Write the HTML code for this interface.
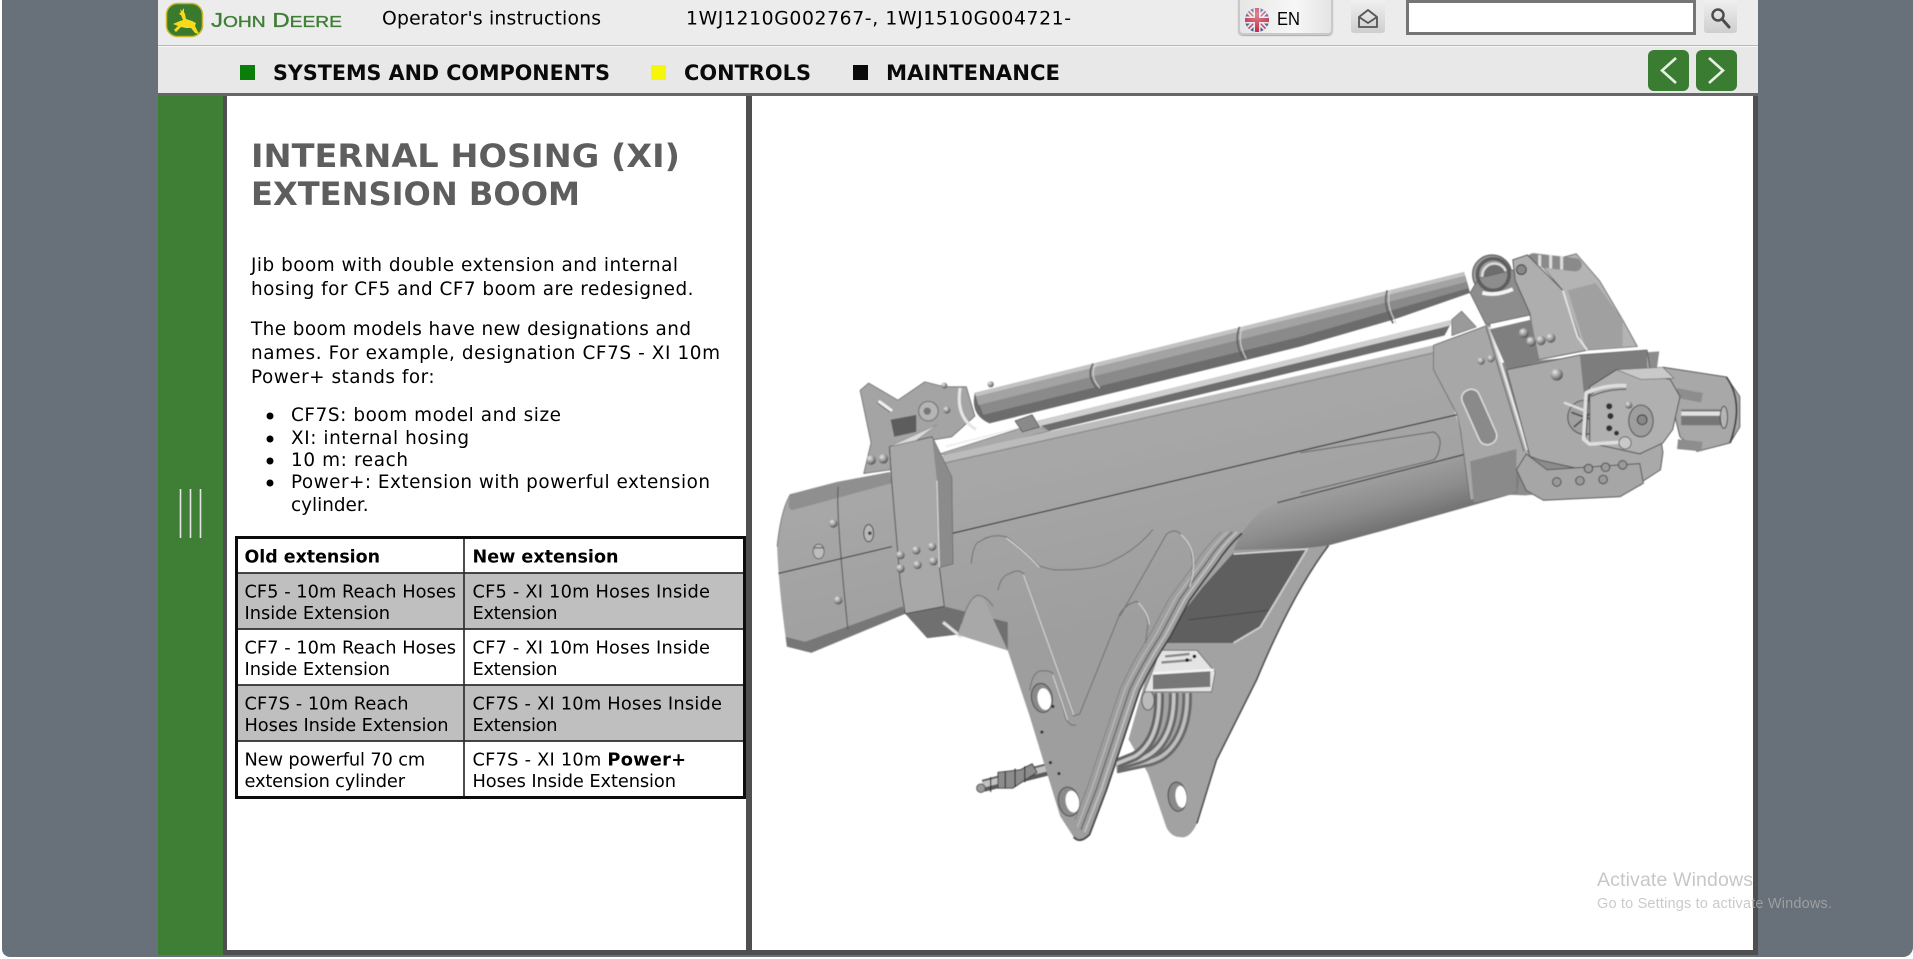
<!DOCTYPE html>
<html lang="en"><head><meta charset="utf-8"><title>Operator's instructions</title>
<style>
html,body{margin:0;padding:0;width:1913px;height:959px;overflow:hidden;background:#fff}
.a{position:absolute}
#bg{left:2px;top:0;width:1911px;height:957px;background:#687079;border-radius:0 0 10px 8px}
#head{left:158px;top:0;width:1600px;height:45px;background:#ececec}
#hl{left:158px;top:45px;width:1600px;height:2px;background:linear-gradient(#b9b9b9 50%,#f6f6f6 50%)}
#nav{left:158px;top:47px;width:1600px;height:46px;background:#e8e8e8}
#nl{left:158px;top:93px;width:1600px;height:3px;background:#666}
#side{left:158px;top:96px;width:65px;height:859px;background:#3f7f35}
#frame{left:223px;top:96px;width:1535px;height:859px;background:#4f4f4f}
#pl{left:227px;top:96px;width:519px;height:854px;background:#fff}
#pr{left:752px;top:96px;width:1001px;height:854px;background:#fff}
.btn{background:linear-gradient(#f0f0f0,#cfcfcf);border-radius:0 0 3px 3px}
#en{left:1238px;top:0;width:91px;height:33px;border:2px solid #c9c9c9;border-top:0;border-radius:0 0 5px 5px;background:linear-gradient(90deg,#e6e6e6,#f7f7f7 60%,#e4e4e4);box-shadow:0 1px 1px #aaa}
#inp{left:1406px;top:0;width:284px;height:29px;border:3px solid #757575;background:#fff}
.g{width:41px;height:41px;top:50px;background:#3a7d32;border-radius:6px}
svg{position:absolute;left:0;top:0}
text{font-family:"DejaVu Sans","Liberation Sans",sans-serif;fill:#000}
.t{font-size:17.8px}.p{font-size:18.4px}
.n{font-size:21.5px;font-weight:bold;fill:#0a0a0a}
.h{font-size:32px;font-weight:bold;fill:#5e5e5e}
.b{font-weight:bold}
</style></head><body>
<div class="a" id="bg"></div>
<div class="a" id="head"></div><div class="a" id="hl"></div><div class="a" id="nav"></div><div class="a" id="nl"></div>
<div class="a" id="frame"></div><div class="a" id="side"></div><div class="a" id="pl"></div><div class="a" id="pr"></div>
<div class="a" id="en"></div>
<div class="a btn" style="left:1351px;top:0;width:34px;height:33px"></div>
<div class="a" id="inp"></div>
<div class="a btn" style="left:1704px;top:0;width:33px;height:33px"></div>
<div class="a g" style="left:1648px"></div><div class="a g" style="left:1696px"></div>

<svg width="1913" height="959" viewBox="0 0 1913 959" xmlns="http://www.w3.org/2000/svg">
<defs>
<linearGradient id="face" gradientUnits="userSpaceOnUse" x1="950" y1="320" x2="990" y2="500"><stop offset="0" stop-color="#a9a9a9"/><stop offset="1" stop-color="#9e9e9e"/></linearGradient>
<linearGradient id="under" gradientUnits="userSpaceOnUse" x1="1120" y1="385" x2="1135" y2="440"><stop offset="0" stop-color="#a4a4a4"/><stop offset=".55" stop-color="#8c8c8c"/><stop offset="1" stop-color="#6a6a6a"/></linearGradient>
<radialGradient id="riv" cx=".35" cy=".3" r=".8"><stop offset="0" stop-color="#e8e8e8"/><stop offset=".6" stop-color="#8a8a8a"/><stop offset="1" stop-color="#3d3d3d"/></radialGradient>
<radialGradient id="gloss" cx=".5" cy=".25" r=".8"><stop offset="0" stop-color="#fff" stop-opacity=".45"/><stop offset="1" stop-color="#fff" stop-opacity="0"/></radialGradient>
<clipPath id="fl"><circle cx="1257" cy="20" r="12"/></clipPath>
<filter id="soft"><feGaussianBlur stdDeviation=".45"/></filter>
</defs>

<!-- logo -->
<rect x="166.500" y="3.500" width="36" height="33" rx="11" fill="#3a7a2c" stroke="#c9b62c" stroke-width="1.500"/>
<path d="M173,24 L180,21 L183,20 L181,15 L179,14 L181,12 L180,9 L182,11 L184,8 L184,12 L185,14 L186,19 L192,21 L196,23 L195,26 L199,34 L195,33 L191,28 L186,28 L181,27 L176,32 L174,30 L178,26 Z" fill="#f7d91e"/>
<text x="211" y="27" style='font-family:"Liberation Sans",sans-serif;font-size:20px;fill:#3f7f35' stroke="#3f7f35" stroke-width=".35" textLength="131" lengthAdjust="spacingAndGlyphs">J<tspan font-size="16">OHN</tspan> D<tspan font-size="16">EERE</tspan></text>

<!-- header text -->
<text x="382" y="24.500" font-size="18.800" textLength="219">Operator's instructions</text>
<text x="686" y="24.500" font-size="18.800" textLength="385">1WJ1210G002767-, 1WJ1510G004721-</text>

<!-- flag -->
<g clip-path="url(#fl)"><rect x="1245" y="8" width="24" height="24" fill="#3b4f8f"/>
<path d="M1245,8 L1269,32 M1269,8 L1245,32" stroke="#e8e2e6" stroke-width="5"/>
<path d="M1245,8 L1269,32 M1269,8 L1245,32" stroke="#b52c46" stroke-width="1.500"/>
<path d="M1257,8 V32 M1245,20 H1269" stroke="#e8e2e6" stroke-width="7"/>
<path d="M1257,8 V32 M1245,20 H1269" stroke="#c0223f" stroke-width="4"/>
<circle cx="1257" cy="20" r="12" fill="url(#gloss)"/></g>
<text x="1277" y="25" style='font-family:"Liberation Sans",sans-serif;font-size:18.500px' textLength="23" lengthAdjust="spacingAndGlyphs">EN</text>

<!-- envelope -->
<path d="M1359,17 L1368,10 L1377,17 V27 H1359 Z M1359,17 L1368,23 L1377,17" fill="none" stroke="#555" stroke-width="1.800" stroke-linejoin="round"/>
<!-- search -->
<circle cx="1718" cy="15" r="5.500" fill="none" stroke="#4d4d4d" stroke-width="2.500"/>
<path d="M1722,19 L1729,27" stroke="#4d4d4d" stroke-width="3" stroke-linecap="round"/>
<!-- chevrons -->
<path d="M1676,58 L1662,70.500 L1676,83" fill="none" stroke="#e8f0e6" stroke-width="2.600"/>
<path d="M1709,58 L1723,70.500 L1709,83" fill="none" stroke="#e8f0e6" stroke-width="2.600"/>

<!-- nav -->
<rect x="240" y="65" width="15" height="15" fill="#0b7d0b"/>
<text class="n" x="273" y="80" textLength="337" lengthAdjust="spacingAndGlyphs">SYSTEMS AND COMPONENTS</text>
<rect x="651" y="65" width="15" height="15" fill="#f6f609"/>
<text class="n" x="684" y="80" textLength="127" lengthAdjust="spacingAndGlyphs">CONTROLS</text>
<rect x="853" y="65" width="15" height="15" fill="#0a0a0a"/>
<text class="n" x="886" y="80" textLength="174" lengthAdjust="spacingAndGlyphs">MAINTENANCE</text>

<!-- handle -->
<path d="M180.500,489 V538 M190.500,489 V538 M200.500,489 V538" stroke="#e4e4e4" stroke-width="1.600"/>

<!-- article -->
<text class="h" x="251" y="167" textLength="429" lengthAdjust="spacingAndGlyphs">INTERNAL HOSING (XI)</text>
<text class="h" x="251" y="205" textLength="329" lengthAdjust="spacingAndGlyphs">EXTENSION BOOM</text>
<text class="p" x="251" y="271" textLength="427">Jib boom with double extension and internal</text>
<text class="p" x="251" y="295" textLength="442.500">hosing for CF5 and CF7 boom are redesigned.</text>
<text class="p" x="251" y="335" textLength="440">The boom models have new designations and</text>
<text class="p" x="251" y="359" textLength="469">names. For example, designation CF7S - XI 10m</text>
<text class="p" x="251" y="383" textLength="183.600">Power+ stands for:</text>
<text class="p" x="291" y="421.200" textLength="270">CF7S: boom model and size</text>
<text class="p" x="291" y="444" textLength="178">XI: internal hosing</text>
<text class="p" x="291" y="466.200" textLength="117">10 m: reach</text>
<text class="p" x="291" y="488.200" textLength="419">Power+: Extension with powerful extension</text>
<text class="p" x="291" y="511.200" textLength="77.600">cylinder.</text>
<circle cx="270" cy="416" r="3.500"/><circle cx="270" cy="439" r="3.500"/><circle cx="270" cy="461" r="3.500"/><circle cx="270" cy="483" r="3.500"/>

<!-- table -->
<rect x="238" y="573" width="506" height="56" fill="#bfbfbf"/>
<rect x="238" y="685" width="506" height="56" fill="#bfbfbf"/>
<path d="M238,573 H744 M238,629 H744 M238,685 H744 M238,741 H744 M464,538 V798" stroke="#2e2e2e" stroke-width="1.700"/>
<rect x="236.500" y="537.500" width="508" height="260" fill="none" stroke="#0c0c0c" stroke-width="3"/>
<text class="t b" x="244.500" y="562.700" textLength="135.500" lengthAdjust="spacingAndGlyphs">Old extension</text>
<text class="t b" x="472.500" y="562.700" textLength="146" lengthAdjust="spacingAndGlyphs">New extension</text>
<text class="t" x="244.500" y="597.700" textLength="211.500">CF5 - 10m Reach Hoses</text>
<text class="t" x="244.500" y="619" textLength="145.500">Inside Extension</text>
<text class="t" x="472.500" y="597.700" textLength="237.500">CF5 - XI 10m Hoses Inside</text>
<text class="t" x="472.500" y="619" textLength="85">Extension</text>
<text class="t" x="244.500" y="653.700" textLength="211.500">CF7 - 10m Reach Hoses</text>
<text class="t" x="244.500" y="675" textLength="145.500">Inside Extension</text>
<text class="t" x="472.500" y="653.700" textLength="237.500">CF7 - XI 10m Hoses Inside</text>
<text class="t" x="472.500" y="675" textLength="85">Extension</text>
<text class="t" x="244.500" y="709.700" textLength="164">CF7S - 10m Reach</text>
<text class="t" x="244.500" y="731" textLength="204">Hoses Inside Extension</text>
<text class="t" x="472.500" y="709.700" textLength="249.500">CF7S - XI 10m Hoses Inside</text>
<text class="t" x="472.500" y="731" textLength="85">Extension</text>
<text class="t" x="244.500" y="765.700" textLength="180.700">New powerful 70 cm</text>
<text class="t" x="244.500" y="787" textLength="160.500">extension cylinder</text>
<text class="t" x="472.500" y="765.700" textLength="213.500">CF7S - XI 10m <tspan class="b">Power+</tspan></text>
<text class="t" x="472.500" y="787" textLength="203.500">Hoses Inside Extension</text>

<!-- boom illustration -->
<g transform="scale(1.22003 1.2201)" filter="url(#soft)" stroke-linejoin="round">
 <!-- rear bracket -->
 <path d="M705,320 L712,314 L736,328 L758,313 L774,317 L792,317 L799,341 L780,358 L731,366 L730,385 L708,388 L714,363 Z" fill="#a4a4a4" stroke="#6b6b6b" stroke-width=".7"/>
 <path d="M720,329 L731,337" stroke="#f2f2f2" stroke-width="3"/><path d="M719,330 L730,338" stroke="#555" stroke-width=".7"/>
 <path d="M730,344 L751,340 L751,354 L733,358 Z" fill="#5d5d5d"/>
 <circle cx="761" cy="337" r="8" fill="#b5b5b5" stroke="#666" stroke-width=".8"/><circle cx="760" cy="337" r="3" fill="#777"/>
 <circle cx="776" cy="336" r="3" fill="url(#riv)"/><circle cx="774" cy="316" r="2.500" fill="url(#riv)"/><circle cx="812" cy="315" r="2.500" fill="url(#riv)"/>
 <path d="M787,318 Q783,342 800,352" fill="none" stroke="#e6e6e6" stroke-width="2.500"/>
 <circle cx="714" cy="377" r="4" fill="url(#riv)"/><circle cx="724" cy="376" r="4" fill="url(#riv)"/>

 <!-- big tube -->
 <path d="M799,322 L1200,223 L1205,240 L1142,262 L1066,284 L811,347 Q795,340 799,322 Z" fill="#6c6c6c"/>
 <path d="M799,322 L1200,223 L1204,236 L1066,276 L806,340 Z" fill="#8a8a8a"/>
 <path d="M799,322 L1200,223 L1202,231 L1066,266 L802,332 Z" fill="#a3a3a3"/>
 <path d="M799,322 L1200,223 L1201,226 L800,325 Z" fill="#c3c3c3"/>
 <path d="M896,298 Q890,308 899,318 M1016,268 Q1011,280 1019,294 M1137,238 Q1133,250 1142,265" fill="none" stroke="#5f5f5f" stroke-width="1.300"/>
 <path d="M897,298 Q891,308 900,318 M1017,268 Q1012,280 1020,294 M1138,238 Q1134,250 1143,265" fill="none" stroke="#d5d5d5" stroke-width=".8" transform="translate(1.500 0)"/>
 <!-- thin tube -->
 <path d="M846,346 L1191,262 L1184,275 L861,353 Z" fill="#6d6d6d"/>
 <path d="M846,346 L1191,262 L1188,267 L853,349 Z" fill="#cfcfcf"/>
 <path d="M775,366 L850,347" stroke="#efefef" stroke-width="1.500"/>
 <path d="M770,372 L846,348 L861,353 L780,374 Z" fill="#a9a9a9" stroke="#666" stroke-width=".5"/>
 <path d="M832,345 L846,340 L852,350 L838,354 Z" fill="#8a8a8a" stroke="#444" stroke-width=".6"/>

 <!-- rear lever plates -->
 <path d="M1262,216 L1292,208 L1311,230 L1330,262 L1342,284 L1298,287 L1281,238 Z" fill="#b4b4b4" stroke="#666" stroke-width=".7"/>
 <path d="M1285,238 L1308,232 L1330,262 L1330,284 L1300,286 Z" fill="#a0a0a0"/>
 <path d="M1257,213 L1291,217" stroke="#8a8a8a" stroke-width="11" stroke-linecap="round"/>
 <path d="M1262,209 V219 M1271,209 V220 M1280,210 V221" stroke="#ddd" stroke-width="2.500"/>
 <circle cx="1223" cy="225" r="16" fill="#9b9b9b" stroke="#5f5f5f" stroke-width="1"/>
 <circle cx="1225" cy="226" r="10" fill="#6e6e6e" stroke="#ddd" stroke-width="2"/>
 <path d="M1205,240 L1212,228 L1245,220 L1255,258 L1218,266 Z" fill="#8d8d8d" stroke="#555" stroke-width=".6"/>
 <circle cx="1224" cy="225" r="13" fill="none" stroke="#5e5e5e" stroke-width="3"/>
 <path d="M1215,240 Q1226,243 1240,237" stroke="#f5f5f5" stroke-width="3" fill="none"/>
 <path d="M1240,213 L1252,209 L1281,238 L1293,276 L1301,287 L1260,295 L1254,257 L1242,230 Z" fill="#aeaeae" stroke="#555" stroke-width=".8"/>
 <path d="M1281,238 L1293,276 L1301,287" fill="none" stroke="#e5e5e5" stroke-width="1.500"/>
 <circle cx="1247" cy="221" r="4" fill="#888" stroke="#333" stroke-width=".8"/>
 <path d="M1190,262 L1198,255 L1210,268 L1190,275 Z" fill="#9a9a9a" stroke="#666" stroke-width=".5"/>

 <!-- rear gusset + dark panel -->
 <path d="M1000,430 L1090,445 Q1060,485 1030,557 L997,623 L981,675 Q975,688 967,686 Q960,686 956,678 L941,634 L925,606 L955,500 Z" fill="#a2a2a2"/>
 <path d="M1089,447 Q1060,485 1030,557 L997,623 L981,675" fill="none" stroke="#4c4c4c" stroke-width="1.300"/>
 <path d="M1011,453 L1072,449 L1033,514 L1011,527 L950,527 L986,481 Z" fill="#5e5e5e"/>
 <path d="M1011,454 L1071,450" stroke="#d9d9d9" stroke-width="1.400"/>
 <path d="M974,508 L1042,500" stroke="#444" stroke-width=".7"/>
 <path d="M1072,449 L1033,514 L1011,527" fill="none" stroke="#cfcfcf" stroke-width="1.500"/>

 <!-- hoses -->
 <g fill="none" stroke-linecap="butt">
 <path d="M973,568 C974,600 960,622 938,625 L915,630" stroke="#6a6a6a" stroke-width="8"/>
 <path d="M973,568 C974,600 960,622 938,625 L915,630" stroke="#bdbdbd" stroke-width="3"/>
 <path d="M962,568 C963,600 950,618 932,623 L915,628" stroke="#6a6a6a" stroke-width="8"/>
 <path d="M962,568 C963,600 950,618 932,623 L915,628" stroke="#c5c5c5" stroke-width="3"/>
 <path d="M950,568 C951,596 943,612 930,620 L915,626" stroke="#666" stroke-width="8"/>
 <path d="M950,568 C951,596 943,612 930,620 L915,626" stroke="#c5c5c5" stroke-width="3"/>
 </g>
 <ellipse cx="941" cy="574" rx="5" ry="8" fill="#bbb" stroke="#555" stroke-width=".8"/>
 <!-- hose clamp -->
 <path d="M951,533 L981,533 L996,551 L993,567 L938,567 L945,549 Z" fill="#e4e4e4" stroke="#666" stroke-width=".7"/>
 <path d="M945,552 L992,550 L992,563 L945,565 Z" fill="#777"/>
 <path d="M945,552 L995,549" stroke="#f4f4f4" stroke-width="2"/>
 <path d="M955,538 L975,536 M952,543 L977,541" stroke="#888" stroke-width="2"/>
 <circle cx="979" cy="538" r="1.500" fill="#222"/><circle cx="973" cy="541" r="1.500" fill="#222"/>
 <!-- left fitting -->
 <path d="M806,644 L861,630" stroke="#5a5a5a" stroke-width="10"/>
 <path d="M806,643 L861,629" stroke="#c2c2c2" stroke-width="5"/>
 <path d="M818,633 L836,631 L846,626 L850,633 L830,646 L818,646 Z" fill="#8c8c8c" stroke="#3c3c3c" stroke-width=".8"/>
 <path d="M824,632 V646 M832,630 V645 M840,628 V641 M812,637 V649" stroke="#333" stroke-width="1"/>
 <circle cx="804" cy="646" r="3.500" fill="#9a9a9a" stroke="#444" stroke-width=".7"/>

 <!-- backing behind head -->
 <path d="M1195,300 L1360,288 L1345,398 L1250,406 L1200,404 Z" fill="#8c8c8c"/>
 <!-- underside band -->
 <path d="M1011,451 Q1025,418 1047,412 L1202,372 L1248,380 L1243,404 L1137,434 L1089,447 L1072,449 Z" fill="url(#under)"/>
 <!-- main body + front plate -->
 <path d="M637,448 Q640,418 648,405 L686,395 L729,387 L770,374 L1115,298 L1175,283 L1197,352 L1202,372 L1047,412 Q1030,418 1018,437 Q1006,448 997,462 Q985,478 975,492 L959,522 Q944,545 934,566 L907,647 L893,684 Q885,692 880,686 L869,669 L844,587 L826,533 L785,520 L760,523 L742,503 L665,535 L645,530 Q638,480 637,448 Z" fill="url(#face)"/>
 <path d="M648,405 L686,395 L729,387 L731,396 L650,418 Q644,418 648,405 Z" fill="#8f8f8f"/>
 <path d="M770,374 L1175,283 L1176,288 L773,379 Z" fill="#bcbcbc"/>
 <path d="M773,380 L1177,289" stroke="#7a7a7a" stroke-width=".6"/>
 <path d="M645,530 L665,535 L742,503 L740,497 L660,526 L644,522 Z" fill="#777"/>
 <path d="M742,503 L774,497 L826,510 L826,533 L785,520 L760,523 Z" fill="#6f6f6f"/>
 <path d="M773,510 L788,522" stroke="#ddd" stroke-width="2.500"/>
 <path d="M788,511 Q797,482 806,490 L826,533 L785,520 Z" fill="#a8a8a8"/>
 <path d="M1047,412 L1202,372" fill="none" stroke="#3f3f3f" stroke-width="1"/>
 <!-- front plate edge -->
 <g fill="none">
 <path id="edge" d="M1018,437 Q1006,448 997,462 Q985,478 975,492 L959,522 Q944,545 934,566 L907,647 L893,684 Q885,692 880,686" stroke="#444" stroke-width="1.500"/>
 <path d="M1014,436 Q1002,447 993,461 Q981,477 971,491 L955,521 Q940,544 930,565 L903,646 L889,682" stroke="#c2c2c2" stroke-width="1.300"/>
 <path d="M1010,436 Q998,447 989,461 Q977,477 967,491 L951,521 Q936,544 926,565 L899,646 L886,680" stroke="#555" stroke-width=".8"/>
 <path d="M1006,436 Q994,447 985,461 Q973,477 963,491 L947,521 Q932,544 922,565 L895,646 L883,678" stroke="#bababa" stroke-width="1"/>
 <path d="M1001,436 Q989,447 980,461 Q968,477 958,491 L942,521 Q927,544 918,565 L891,646 L881,672" stroke="#7a7a7a" stroke-width=".6"/>
 </g>
 <!-- face lines -->
 <path d="M781,437 L1115,358 L1194,340" stroke="#222" stroke-width=".9" fill="none"/>
 <path d="M1066,371 L1175,354 Q1182,358 1180,366 Q1179,374 1175,377 L1066,404" stroke="#555" stroke-width=".7" fill="none"/>
 <g fill="none" stroke="#6e6e6e" stroke-width=".8">
 <path d="M796,462 Q798,444 803,444 Q812,437 825,440 Q840,452 852,464 L863,467 Q900,468 913,459 Q932,450 945,434"/>
 <path d="M918,505 L956,438 Q962,433 967,437 Q976,444 977,456 Q979,470 974,481"/>
 <path d="M818,484 Q820,472 828,470 Q834,466 839,470 L880,587 L885,585 L918,503 Q924,494 932,493 Q940,500 941,511 L939,527"/>
 <path d="M844,566 Q846,552 852,550 Q860,549 863,552 L874,590 Q878,596 882,594"/>
 <path d="M788,511 Q794,490 801,488 Q808,488 814,497"/>
 </g>
 <g fill="none" stroke="#e0e0e0" stroke-width=".8">
 <path d="M839,471 L880,586"/><path d="M968,438 Q977,446 978,458 Q979,470 975,481"/><path d="M933,494 Q941,502 942,512"/><path d="M863,553 L875,590"/>
 <path d="M825,441 Q840,452 852,465"/>
 </g>
 <!-- plate holes -->
 <g>
 <ellipse cx="854" cy="572" rx="8.500" ry="12" fill="#8a8a8a" stroke="#444" stroke-width=".8" transform="rotate(-10 854 572)"/>
 <ellipse cx="856" cy="573" rx="5.500" ry="9" fill="#fff" transform="rotate(-10 856 573)"/>
 <ellipse cx="876" cy="657" rx="8.500" ry="12" fill="#8a8a8a" stroke="#444" stroke-width=".8" transform="rotate(-10 876 657)"/>
 <ellipse cx="879" cy="657" rx="5.500" ry="9" fill="#fff" transform="rotate(-10 879 657)"/>
 <ellipse cx="965" cy="653" rx="7.500" ry="12" fill="#8a8a8a" stroke="#444" stroke-width=".8" transform="rotate(-6 965 653)"/>
 <ellipse cx="968" cy="653" rx="4.500" ry="9" fill="#fff" transform="rotate(-6 968 653)"/>
 <circle cx="863" cy="579" r="1.300" fill="#333"/><circle cx="854" cy="600" r="1.300" fill="#333"/><circle cx="861" cy="625" r="1.300" fill="#333"/><circle cx="868" cy="634" r="1.300" fill="#333"/>
 </g>
 <!-- collar -->
 <path d="M729,366 L764,358 L780,391 L781,462 L770,465 L774,497 L742,503 L738,478 L731,396 Z" fill="#a8a8a8" stroke="#4f4f4f" stroke-width=".8"/>
 <path d="M764,358 L780,391 L781,462 L770,465 L768,394 Z" fill="#8b8b8b"/>
 <path d="M729,366 L764,350 L768,348 L751,361 Z" fill="#d9d9d9" stroke="#777" stroke-width=".4"/>
 <path d="M768,394 L770,465" stroke="#e0e0e0" stroke-width=".8"/>
 <!-- rear box seams -->
 <path d="M687,399 Q685,420 695,516" fill="none" stroke="#5a5a5a" stroke-width=".9"/>
 <path d="M638,470 L731,448" stroke="#333" stroke-width=".9"/>
 <path d="M637,448 Q640,418 648,405" fill="none" stroke="#7a7a7a" stroke-width=".8"/>
 <g fill="url(#riv)">
 <circle cx="683" cy="429" r="3.500"/><circle cx="687" cy="492" r="3.500"/>
 <circle cx="738" cy="455" r="3.500"/><circle cx="751" cy="451" r="3.500"/><circle cx="764" cy="448" r="3.500"/><circle cx="738" cy="466" r="3.500"/><circle cx="752" cy="463" r="3.500"/><circle cx="765" cy="460" r="3.500"/>
 </g>
 <ellipse cx="671" cy="452" rx="4.500" ry="6" fill="#bdbdbd" stroke="#555" stroke-width=".7"/><path d="M667,449 H675" stroke="#444" stroke-width=".8"/>
 <ellipse cx="712" cy="437" rx="4" ry="7" fill="#b8b8b8" stroke="#444" stroke-width=".8"/><circle cx="713" cy="437" r="1.500" fill="#444"/>

 <!-- head -->
 <path d="M1175,283 L1221,266 L1252,369 L1256,375 L1243,385 L1243,404 L1205,410 L1197,352 L1194,339 L1175,303 Z" fill="#a7a7a7" stroke="#6a6a6a" stroke-width=".7"/>
 <path d="M1205,378 L1243,368 L1243,404 L1208,412 Z" fill="#8a8a8a"/>
 <path d="M1221,268 L1252,369" stroke="#e8e8e8" stroke-width="2"/><path d="M1218,268 L1249,370" stroke="#5a5a5a" stroke-width=".7"/>
 <rect x="1205" y="318" width="15" height="48" rx="7" fill="#8a8a8a" stroke="#dedede" stroke-width="1.200" transform="rotate(-24 1212 342)"/>
 <circle cx="1214" cy="296" r="3" fill="url(#riv)"/><circle cx="1222" cy="294" r="3" fill="url(#riv)"/>
 <path d="M1221,270 L1255,262 L1262,296 L1236,304 Z" fill="#7f7f7f"/>
 <circle cx="1249" cy="273" r="4" fill="url(#riv)"/><circle cx="1255" cy="280" r="4" fill="url(#riv)"/><circle cx="1263" cy="279" r="4" fill="url(#riv)"/><circle cx="1271" cy="277" r="4" fill="url(#riv)"/>
 <path d="M1235,303 L1295,291 L1350,287 L1363,371 L1361,385 L1344,396 L1298,385 L1262,377 L1254,374 Z" fill="#a9a9a9" stroke="#555" stroke-width=".8"/>
 <path d="M1295,291 L1299,330 L1350,302 L1350,287 Z" fill="#7d7d7d"/>
 <circle cx="1276" cy="307" r="5" fill="url(#riv)"/>
 <circle cx="1299" cy="342" r="14" fill="#a0a0a0" stroke="#4a4a4a" stroke-width=".8"/><path d="M1288,338 L1310,346 M1299,329 V355 M1290,350 L1309,334" stroke="#555" stroke-width="1.500"/>
 <path d="M1243,385 L1251,372 L1268,385 L1344,380 L1347,396 L1328,407 L1265,410 L1251,402 Z" fill="#a6a6a6" stroke="#555" stroke-width=".8"/>
 <circle cx="1276" cy="395" r="3.500" fill="#9a9a9a" stroke="#444" stroke-width=".8"/><circle cx="1295" cy="394" r="3.500" fill="#9a9a9a" stroke="#444" stroke-width=".8"/><circle cx="1314" cy="393" r="3.500" fill="#9a9a9a" stroke="#444" stroke-width=".8"/>
 <circle cx="1302" cy="384" r="3.500" fill="#9a9a9a" stroke="#444" stroke-width=".8"/><circle cx="1316" cy="383" r="3.500" fill="#9a9a9a" stroke="#444" stroke-width=".8"/><circle cx="1330" cy="381" r="3.500" fill="#9a9a9a" stroke="#444" stroke-width=".8"/>
 <!-- far right plate -->
 <path d="M1363,301 L1415,309 L1426,325 L1426,350 L1418,363 L1391,370 L1377,358 Z" fill="#a8a8a8" stroke="#555" stroke-width=".8"/>
 <path d="M1415,309 Q1430,330 1418,363" fill="none" stroke="#444" stroke-width="1.500"/>
 <path d="M1374,322 L1395,326 M1375,364 L1395,366" stroke="#8d8d8d" stroke-width="8"/>
 <path d="M1378,342 L1412,342" stroke="#777" stroke-width="13"/><path d="M1378,339 L1412,339" stroke="#e2e2e2" stroke-width="3.500"/>
 <ellipse cx="1413" cy="342" rx="3" ry="9" fill="#b5b5b5" stroke="#444" stroke-width=".8"/>
 <!-- front plate -->
 <path d="M1325,303 L1369,311 L1377,325 L1371,352 L1363,363 L1344,372 L1303,363 L1303,317 Z" fill="#b0b0b0" stroke="#4d4d4d" stroke-width=".8"/>
 <path d="M1325,303 L1363,301 L1372,310 L1345,311 Z" fill="#c9c9c9" stroke="#666" stroke-width=".5"/>
 <path d="M1306,319 L1300,322 L1298,360 L1303,364 L1335,362 M1300,322 Q1316,315 1333,316" fill="none" stroke="#dfdfdf" stroke-width="2.800"/>
 <path d="M1306,322 L1302,325 L1300,358 M1304,325 Q1316,319 1333,319" fill="none" stroke="#444" stroke-width=".8"/>
 <path d="M1282,330 L1300,337" stroke="#ddd" stroke-width="2"/>
 <ellipse cx="1345" cy="345" rx="10" ry="13" fill="#9e9e9e" stroke="#444" stroke-width=".8"/><circle cx="1346" cy="344" r="4" fill="#888" stroke="#333" stroke-width=".8"/>
 <g fill="#333"><circle cx="1319" cy="333" r="2.500"/><circle cx="1320" cy="341" r="2.500"/><circle cx="1319" cy="351" r="2.500"/><circle cx="1325" cy="355" r="2"/></g>
 <circle cx="1335" cy="332" r="3" fill="url(#riv)"/><circle cx="1332" cy="363" r="5" fill="#c9c9c9" stroke="#555" stroke-width=".7"/>
</g>

<!-- watermark -->
<text x="1597" y="886" style='font-family:"Liberation Sans",sans-serif;font-size:19.500px;fill:#b4b4b4;fill-opacity:.75' textLength="156">Activate Windows</text>
<text x="1597" y="908" style='font-family:"Liberation Sans",sans-serif;font-size:14.500px;fill:#b4b4b4;fill-opacity:.7' textLength="235">Go to Settings to activate Windows.</text>
</svg>
</body></html>
